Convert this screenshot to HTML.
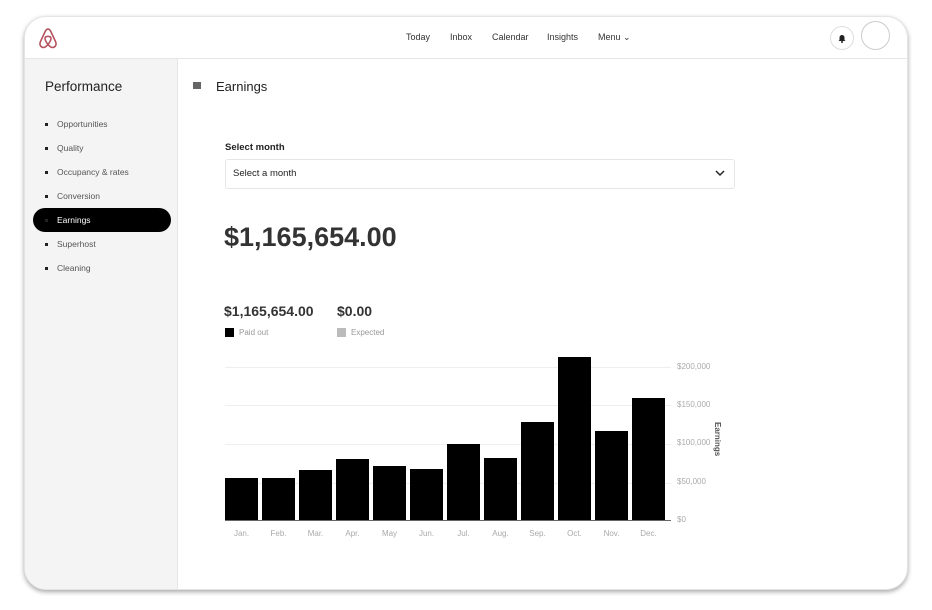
<!DOCTYPE html>
<html><head><style>
*{margin:0;padding:0;box-sizing:border-box}
body{width:932px;height:610px;background:#fff;font-family:"Liberation Sans",sans-serif;position:relative;overflow:hidden;color:#222}
.card{position:absolute;left:24px;top:16px;width:884px;height:574px;border-radius:22px;background:#fff;box-shadow:0 2px 5px rgba(0,0,0,.35);overflow:hidden;border:1px solid #e4e4e4}
.hdr{position:absolute;left:0;top:0;right:0;height:42px;border-bottom:1px solid #e6e6e6;background:#fff}
.nav{position:absolute;top:15px;font-size:9px;color:#333}
.side{position:absolute;left:0;top:42px;width:153px;bottom:0;background:#f4f4f4;border-right:1px solid #e6e6e6}
.t{position:absolute;white-space:nowrap}
.si{position:absolute;left:20px;font-size:8.5px;color:#555}
.si:before{content:"";display:inline-block;width:3px;height:3px;background:#222;margin-right:9px;vertical-align:middle}
.bar{position:absolute;width:33px;background:#000;bottom:69px}
.gl{position:absolute;left:200px;width:446px;height:1px;background:#eee}
.yl{position:absolute;left:652px;font-size:8px;color:#aaa}
.ml{position:absolute;top:512px;font-size:8px;color:#aaa;width:33px;text-align:center}
</style></head><body>
<div class="card">
 <div class="hdr">
  <svg style="position:absolute;left:13px;top:10px" width="20" height="22" viewBox="0 0 20 22"><path d="M10 2C8 2 7.5 4 6 7L2.5 14.5C1 18 3 20.5 5.5 20.5 7.5 20.5 9 18.5 10 17.5 11 18.5 12.5 20.5 14.5 20.5 17 20.5 19 18 17.5 14.5L14 7C12.5 4 12 2 10 2ZM10 17.5C8 15 7 13 7 11.5 7 10 8.3 9.3 10 9.3 11.7 9.3 13 10 13 11.5 13 13 12 15 10 17.5Z" fill="none" stroke="#b5535f" stroke-width="1.6"/></svg>
  <span class="nav" style="left:381px">Today</span>
  <span class="nav" style="left:425px">Inbox</span>
  <span class="nav" style="left:467px">Calendar</span>
  <span class="nav" style="left:522px">Insights</span>
  <span class="nav" style="left:573px">Menu &#8964;</span>
  <div style="position:absolute;left:805px;top:9px;width:24px;height:24px;border-radius:50%;border:1px solid #ddd"></div>
  <svg style="position:absolute;left:812px;top:16px" width="10" height="10" viewBox="0 0 10 10"><path d="M2.5 7V4.5A2.5 2.5 0 0 1 7.5 4.5V7L8.5 8H1.5Z" fill="#222"/><circle cx="5" cy="9" r="1" fill="#222"/></svg>
  <div style="position:absolute;left:836px;top:4px;width:29px;height:29px;border-radius:50%;border:1px solid #ccc"></div>
 </div>
 <div class="side">
  <div class="t" style="left:20px;top:20px;font-size:13.5px;color:#222">Performance</div>
  <div class="si" style="top:60px">Opportunities</div>
  <div class="si" style="top:84px">Quality</div>
  <div class="si" style="top:108px">Occupancy &amp; rates</div>
  <div class="si" style="top:132px">Conversion</div>
  <div style="position:absolute;left:8px;top:149px;width:138px;height:24px;border-radius:12px;background:#000"></div>
  <div class="si" style="top:156px;color:#fff">Earnings</div>
  <div class="si" style="top:180px">Superhost</div>
  <div class="si" style="top:204px">Cleaning</div>
 </div>
 <div style="position:absolute;left:168px;top:65px;width:8px;height:7px;background:#666"></div>
 <div class="t" style="left:191px;top:62px;font-size:13px">Earnings</div>
 <div class="t" style="left:200px;top:125px;font-size:9.5px;font-weight:bold">Select month</div>
 <div style="position:absolute;left:200px;top:142px;width:510px;height:30px;border:1px solid #e6e6e6;border-radius:3px"></div>
 <div class="t" style="left:208px;top:151px;font-size:9.5px">Select a month</div>
 <svg style="position:absolute;left:690px;top:153px" width="10" height="7"><path d="M1 1L5 5 9 1" fill="none" stroke="#222" stroke-width="1.5"/></svg>
 <div class="t" style="left:199px;top:205px;font-size:27px;font-weight:bold;color:#333">$1,165,654.00</div>
 <div class="t" style="left:199px;top:286px;font-size:14px;font-weight:bold;color:#333">$1,165,654.00</div>
 <div class="t" style="left:312px;top:286px;font-size:14px;font-weight:bold;color:#333">$0.00</div>
 <div style="position:absolute;left:200px;top:311px;width:9px;height:9px;background:#000"></div>
 <div class="t" style="left:214px;top:311px;font-size:8px;color:#999">Paid out</div>
 <div style="position:absolute;left:312px;top:311px;width:9px;height:9px;background:#bbb"></div>
 <div class="t" style="left:326px;top:311px;font-size:8px;color:#999">Expected</div>
 <div class="gl" style="top:350px"></div><div class="gl" style="top:388px"></div><div class="gl" style="top:427px"></div><div class="gl" style="top:466px"></div>
 <div style="position:absolute;left:200px;top:503px;width:446px;height:1px;background:#666"></div>
 <div class="yl" style="top:345px">$200,000</div><div class="yl" style="top:383px">$150,000</div><div class="yl" style="top:421px">$100,000</div><div class="yl" style="top:460px">$50,000</div><div class="yl" style="top:498px">$0</div>
 <div class="t" style="left:697px;top:405px;font-size:8px;color:#555;font-weight:bold;transform:rotate(90deg);transform-origin:left top">Earnings</div>
 <div class="bar" style="left:200px;height:42px"></div>
 <div class="bar" style="left:237px;height:42px"></div>
 <div class="bar" style="left:274px;height:50px"></div>
 <div class="bar" style="left:311px;height:61px"></div>
 <div class="bar" style="left:348px;height:54px"></div>
 <div class="bar" style="left:385px;height:51px"></div>
 <div class="bar" style="left:422px;height:76px"></div>
 <div class="bar" style="left:459px;height:62px"></div>
 <div class="bar" style="left:496px;height:98px"></div>
 <div class="bar" style="left:533px;height:163px"></div>
 <div class="bar" style="left:570px;height:89px"></div>
 <div class="bar" style="left:607px;height:122px"></div>
 <div class="ml" style="left:200px">Jan.</div><div class="ml" style="left:237px">Feb.</div><div class="ml" style="left:274px">Mar.</div><div class="ml" style="left:311px">Apr.</div><div class="ml" style="left:348px">May</div><div class="ml" style="left:385px">Jun.</div><div class="ml" style="left:422px">Jul.</div><div class="ml" style="left:459px">Aug.</div><div class="ml" style="left:496px">Sep.</div><div class="ml" style="left:533px">Oct.</div><div class="ml" style="left:570px">Nov.</div><div class="ml" style="left:607px">Dec.</div>
</div>
</body></html>
